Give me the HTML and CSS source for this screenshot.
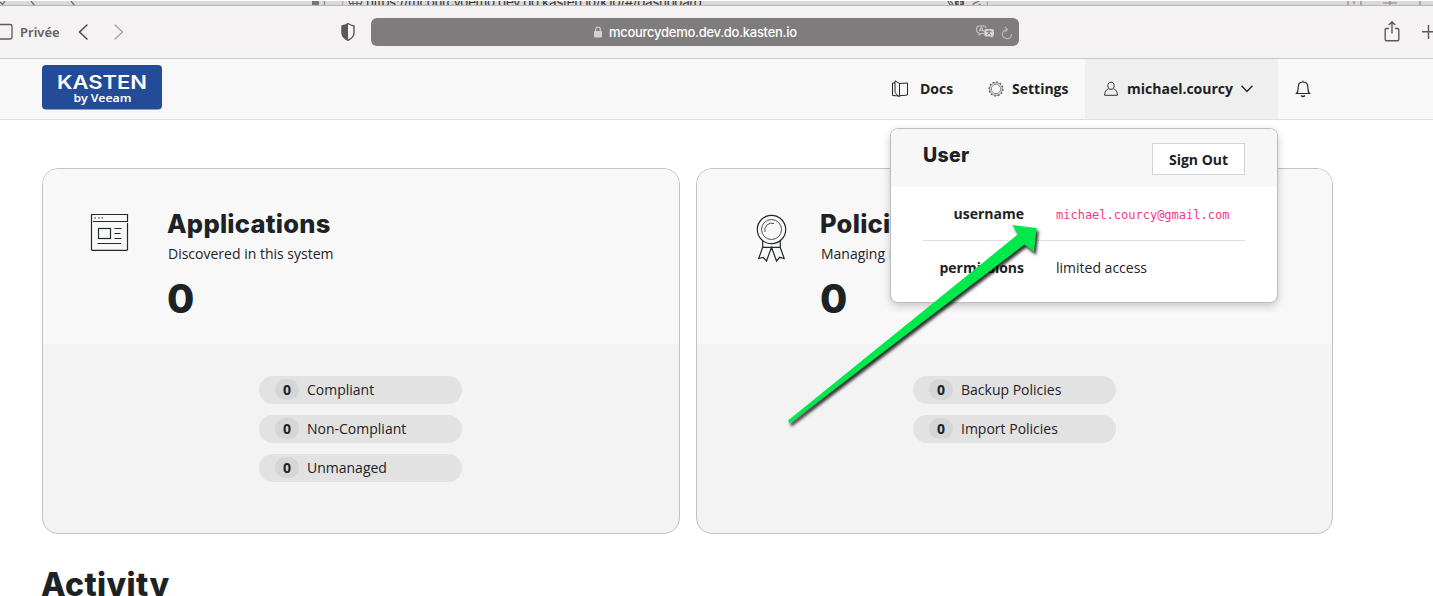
FILE: index.html
```html
<!DOCTYPE html>
<html lang="en">
<head>
<meta charset="utf-8">
<title>Kasten dashboard</title>
<link rel="stylesheet" href="styles.css">
</head>
<body>
<div class="back-window">
  <svg class="back-left" width="366" height="6" viewBox="0 0 366 6" fill="none" stroke="#666" stroke-width="1.2"><path d="M0 2l2.500 2.500L5 1M31 1l4 5M71 1l4 5" /><path fill="#777" stroke="none" d="M312 1h7v5h-7z"/><path stroke="#888" d="M324.500 1v5"/><path stroke="#aaa" d="M342.500 1v5"/><path d="M349 1l2 5M353 1v5M357 1v5M362 1l-2 5M349 3.500h13"/></svg>
  <span class="back-url">https://mcourcydemo.dev.do.kasten.io/k10/#/dashboard</span>
  <svg class="back-right" width="500" height="6" viewBox="933 0 500 6" fill="none" stroke="#666" stroke-width="1.2"><path d="M948 1l2 4h4M950 1l3 3"/><path fill="#555" stroke="none" d="M955 1h9v5h-9z"/><path stroke="#ddd" d="M957 3h5M959.500 1v4"/><path d="M973 6q0-3 4-4l2-1M979 4l2 2"/><path stroke="#aaa" d="M987.500 1v5"/><path stroke="#888" d="M1348 1v5M1354 1v3M1361 1v5M1383 3h14M1390 1v5M1420 1v5"/></svg>
</div>
<div class="toolbar">
  <div class="nav-controls">
    <svg width="13" height="18" viewBox="0 0 13 18" fill="none" stroke="#5b595a" stroke-width="1.3"><rect x="-5" y="1.500" width="17" height="14.500" rx="1.800"/></svg>
    <span class="privacy">Privée</span>
    <svg class="back" width="10" height="16" viewBox="0 0 10 16" fill="none" stroke="#464445" stroke-width="1.500" stroke-linecap="round" stroke-linejoin="round"><path d="M9 1 1.500 8 9 15"/></svg>
    <svg class="forward" width="10" height="16" viewBox="0 0 10 16" fill="none" stroke="#aaa8a9" stroke-width="1.500" stroke-linecap="round" stroke-linejoin="round"><path d="M1 1l7.500 7L1 15"/></svg>
  </div>
  <svg class="shield" width="16" height="20" viewBox="0 0 16 20"><path d="M8 1.500Q10.500 3.300 14 4v7q0 4.500-6 7.300Q2 15.500 2 11V4q3.500-.7 6-2.500z" fill="none" stroke="#59575a" stroke-width="1.400"/><path d="M8 1.500v16.800Q2 15.500 2 11V4q3.500-.7 6-2.500z" fill="#59575a"/></svg>
  <div class="address">
    <svg class="lock" width="8" height="12" viewBox="0 0 8 12"><rect y="5" width="8" height="6.500" rx="1" fill="#d2d0d1"/><path d="M1.700 5V3.300a2.300 2.300 0 0 1 4.600 0V5" fill="none" stroke="#d2d0d1" stroke-width="1.200"/></svg>
    <span class="host">mcourcydemo.dev.do.kasten.io</span>
    <svg class="address-icons" width="38" height="16" viewBox="0 0 38 16" fill="none" stroke="#c9c7c8" stroke-width="1.100"><path d="M8 9.500H5L3 11V9Q.7 8.500.7 7V4Q.7 2 3 2h5q2 0 2 2"/><path d="M3.200 7.500 5.400 3.200l2.200 4.300M4 6.200h3"/><path d="M10 5h6q2 0 2 2v3.500q0 1.500-1.500 2V14l-2-1.500H10q-1.800 0-1.800-2V7q0-2 1.800-2z" fill="#d2d0d1" stroke="none"/><path stroke="#7f7c7d" stroke-width=".9" d="M10.500 7.500h5M13 6v1.500M11 11l3.500-3.500M11.500 8l3.500 3"/><path stroke="#b9b7b8" stroke-width="1.200" d="M31 5.500A4.600 4.600 0 1 0 35.600 10M28.800 2.800l2.700 2.700-2.700 2.700"/></svg>
  </div>
  <svg class="window-actions" width="50" height="22" viewBox="0 0 50 22" fill="none" stroke="#5b595a" stroke-width="1.400"><path d="M6 7.500H3.200Q2.200 7.500 2.200 8.500v9.700q0 1.500 1.500 1.500h10.600q1.500 0 1.500-1.500V8.500q0-1-1-1H12M9 12.500V1M5.800 4l3.200-3.200L12.200 4M39 10.700h14M45.500 4v14"/></svg>
</div>
<header class="site-header">
  <svg class="logo" width="120" height="45" viewBox="0 0 120 45" role="img"><rect width="120" height="44.500" rx="4" fill="#234b98"/><text class="logo-name" x="15" y="23.500" textLength="90" lengthAdjust="spacingAndGlyphs">KASTEN</text><text class="logo-by" x="31.500" y="36.500" textLength="58" lengthAdjust="spacingAndGlyphs">by Veeam</text></svg>
  <nav class="menu">
    <a class="item docs"><svg width="18" height="18" viewBox="0 0 18 18" fill="none" stroke="#24282a" stroke-width="1"><path d="M8.500 3.500 16.500 3v12l-8 .8zM8.500 3.500v13.300M7.500 16.500 4 12.500V.800l4.500 2.700M4 3H1.500v12.500l6.500.5"/></svg>Docs</a>
    <a class="item settings"><svg width="16" height="16" viewBox="0 0 16 16" fill="none" stroke="#54585a"><circle cx="8" cy="8" r="4.700" stroke-width=".7"/><circle cx="8" cy="8" r="6.300" stroke-width=".7"/><circle cx="8" cy="8" r="7" stroke-width="1.100" stroke-dasharray="1.830 1.830"/></svg>Settings</a>
    <a class="item account"><svg width="14" height="16" viewBox="0 0 14 16" fill="none" stroke="#303436"><path d="M10.200 4.700c0 2.100-1.300 3.700-3.200 3.700S3.800 6.800 3.800 4.700 5 1.200 7 1.200s3.200 1.400 3.200 3.500zM4.700 7.800C2 8.800.8 10 .7 14.300h12.600C13.200 10 12 8.800 9.300 7.800"/></svg><span>michael.courcy</span><svg class="caret" width="12" height="8" viewBox="0 0 12 8" fill="none" stroke="#24282a" stroke-width="1.400"><path d="M.6.700 6 6.500 11.400.7"/></svg></a>
    <svg class="bell" width="16" height="18" viewBox="0 0 16 18" fill="none" stroke="#24282a" stroke-width="1.200"><path d="M1.500 13.500c2-2 1.500-4.500 1.700-7C3.400 3.500 5 2 8 2s4.600 1.500 4.800 4.500c.2 2.500-.3 5 1.700 7zM6 15.500q2 2 4 0M8 2V.8"/></svg>
  </nav>
</header>
<main>
  <div class="cards">
    <section class="card">
      <div class="card-head">
        <svg class="card-icon" width="40" height="50" viewBox="0 0 40 50" fill="none" stroke="#24282a" stroke-width="1.200"><path d="M3 8.500h34.500V1.500h-36v35q0 .8.800.8h34.400q.8 0 .8-.8V10"/><rect x="8.500" y="15.500" width="12" height="10"/><path d="M24.500 15.500h7M24.500 20.500h6M24.500 25.500h7M7.500 30.500h23.500"/><path stroke-dasharray="1.500 2" d="M4.500 5h9"/></svg>
        <div><h2>Applications</h2><p>Discovered in this system</p><strong class="total">0</strong></div>
      </div>
      <div class="card-body">
        <div class="pill"><b>0</b>Compliant</div>
        <div class="pill"><b>0</b>Non-Compliant</div>
        <div class="pill"><b>0</b>Unmanaged</div>
      </div>
    </section>
    <section class="card policies">
      <div class="card-head">
        <svg class="card-icon" width="40" height="50" viewBox="-1 -.5 40 50" fill="none" stroke="#24282a" stroke-width="1.200"><circle cx="26.500" cy="16" r="14.200"/><circle cx="26.500" cy="16" r="10" stroke-width=".8"/><path stroke-width=".8" d="M20 18.500A7 7 0 0 1 29 10"/><path d="M17.700 27.500v6.300h17.600v-6.300M17.700 33.800 13.700 45l4.500-1.200 3.300 3.700 5-13.700 5 13.700 3.200-3.700 4.500 1.200-4-11.200"/></svg>
        <div><h2>Policies</h2><p>Managing resources</p><strong class="total">0</strong></div>
      </div>
      <div class="card-body">
        <div class="pill"><b>0</b>Backup Policies</div>
        <div class="pill"><b>0</b>Import Policies</div>
      </div>
    </section>
  </div>
  <h1>Activity</h1>
</main>
<aside class="user-popup">
  <div class="popup-head"><h3>User</h3><button>Sign Out</button></div>
  <dl>
    <div class="row"><dt>username</dt><dd class="email">michael.courcy@gmail.com</dd></div>
    <div class="row"><dt>permissions</dt><dd>limited access</dd></div>
  </dl>
</aside>
<svg class="arrow" width="270" height="220" viewBox="780 215 270 220"><path fill="#00e94c" d="M788 420.500 1018 234.300 1012.300 225 1036.800 228 1034 252 1024.500 244.500 789.500 423.500z"/></svg>
</body>
</html>
```
FILE: styles.css
```css
* { box-sizing: border-box; }
body { margin: 0; width: 1433px; height: 596px; overflow: hidden; position: relative; background: #fff; color: #1d2225; font: 14px/20px "Open Sans", "Noto Sans", sans-serif; }
h1, h2, h3, p, dl, dd { margin: 0; }
svg { display: block; flex: none; }
h1, h2, h3, .total { font-family: Inter, sans-serif; font-weight: 800; }

.back-window { height: 6px; display: flex; overflow: hidden; background: #dad8d9; border-top: 1px solid #fff; border-bottom: 1px solid #b9b7b8; }
.back-left, .back-right { margin-top: -1px; }
.back-url { width: 567px; height: 16px; margin-top: -7px; font: 13.500px/16px Inter, sans-serif; color: #383637; letter-spacing: -.43px; white-space: nowrap; }

.toolbar { height: 53px; display: flex; align-items: center; background: #f4f2f3; border-bottom: 1px solid #c9c7c8; }
.nav-controls { width: 340px; display: flex; align-items: center; }
.privacy { width: 59px; padding-left: 7px; font: 600 13px/20px "Noto Sans", sans-serif; color: #626061; }
.back { margin-left: 6px; }
.forward { margin-left: 26px; }
.address { width: 648px; height: 28px; margin-left: 15px; display: flex; align-items: center; background: #7f7c7d; border-radius: 6px; color: #fff; }
.lock { margin-left: 223px; }
.host { width: 190px; margin-left: 7px; font: 500 13px/20px Inter, sans-serif; white-space: nowrap; letter-spacing: -.28px; }
.address-icons { margin-left: 177px; }
.window-actions { margin-left: 364px; }

.site-header { height: 61px; padding-left: 42px; display: flex; align-items: center; background: #f8f8f8; border-bottom: 1px solid #dedede; }
.logo { margin-top: -4px; }
.logo text { fill: #fff; }
.logo-name { font: 600 18.500px Inter, sans-serif; }
.logo-by { font: 600 11.500px "Noto Sans", sans-serif; }
.menu { height: 60px; display: flex; align-items: center; margin-left: 729px; font-weight: 700; }
.item { display: flex; align-items: center; height: 60px; white-space: nowrap; }
.docs { gap: 11px; width: 97px; }
.settings { gap: 8px; width: 97px; }
.account { width: 193px; padding-left: 19px; background: #efefef; }
.account span { margin-left: 9px; width: 107px; }
.caret { margin-left: 7px; }
.bell { margin-left: 17px; }

main { padding: 48px 0 0 42px; }
.cards { display: grid; grid-template-columns: 638px 637px; gap: 16px; }
.card { height: 366px; border: 1px solid #c3c3c3; border-radius: 16px; overflow: hidden; background: #f3f3f3; }
.card-head { height: 175px; padding: 39px 0 0 47px; display: flex; gap: 38px; background: #f8f8f8; }
.card-icon { margin-top: 5px; overflow: visible; }
.policies .card-head { gap: 37px; }
h2 { margin-left: -1px; font-size: 25.500px; line-height: 32px; white-space: nowrap; letter-spacing: .25px; }
.card p { line-height: 20px; margin-top: 4px; }
.total { display: block; margin: 11px 0 0 -1px; font-size: 39.500px; line-height: 49px; }
.card-body { padding: 32px 0 0 216px; display: grid; gap: 11px; }
.pill { width: 203px; height: 28px; padding-left: 16px; display: flex; align-items: center; gap: 8px; border-radius: 14px; background: #e2e2e2; }
.pill b { width: 24px; height: 21px; margin-top: -1px; border-radius: 11px; background: #d6d6d6; text-align: center; line-height: 21px; }
.policies .card-body { padding-left: 216px; }
h1 { margin: 31px 0 0 -1px; font-size: 32px; line-height: 40px; letter-spacing: .4px; }

.user-popup { position: absolute; left: 890px; top: 128px; width: 388px; height: 175px; overflow: hidden; border: 1px solid #bdbdbd; border-radius: 8px; background: #fff; box-shadow: 0 3px 9px rgba(0,0,0,.2); }
.popup-head { height: 58px; padding: 14px 32px 0; display: flex; justify-content: space-between; background: #f7f7f7; }
h3 { font-size: 19.500px; line-height: 24px; letter-spacing: .3px; }
button { width: 93px; height: 32px; padding: 2px 0 0; border: 1px solid #d3d3d3; background: #fff; color: #1d2225; font: 700 14px/20px "Open Sans", sans-serif; }
dl { padding: 0 32px; }
.row { height: 53px; display: grid; grid-template-columns: 101px 1fr; column-gap: 32px; align-items: center; }
.row + .row { height: 55px; border-top: 1px solid #dedede; }
dt { text-align: right; font-weight: 700; }
.email { padding-top: 2px; font: 12px/20px "DejaVu Sans Mono", monospace; color: #f03a88; }
.arrow { position: absolute; left: 780px; top: 215px; filter: drop-shadow(2px 3px 1.500px rgba(0,0,0,.8)); }
```
